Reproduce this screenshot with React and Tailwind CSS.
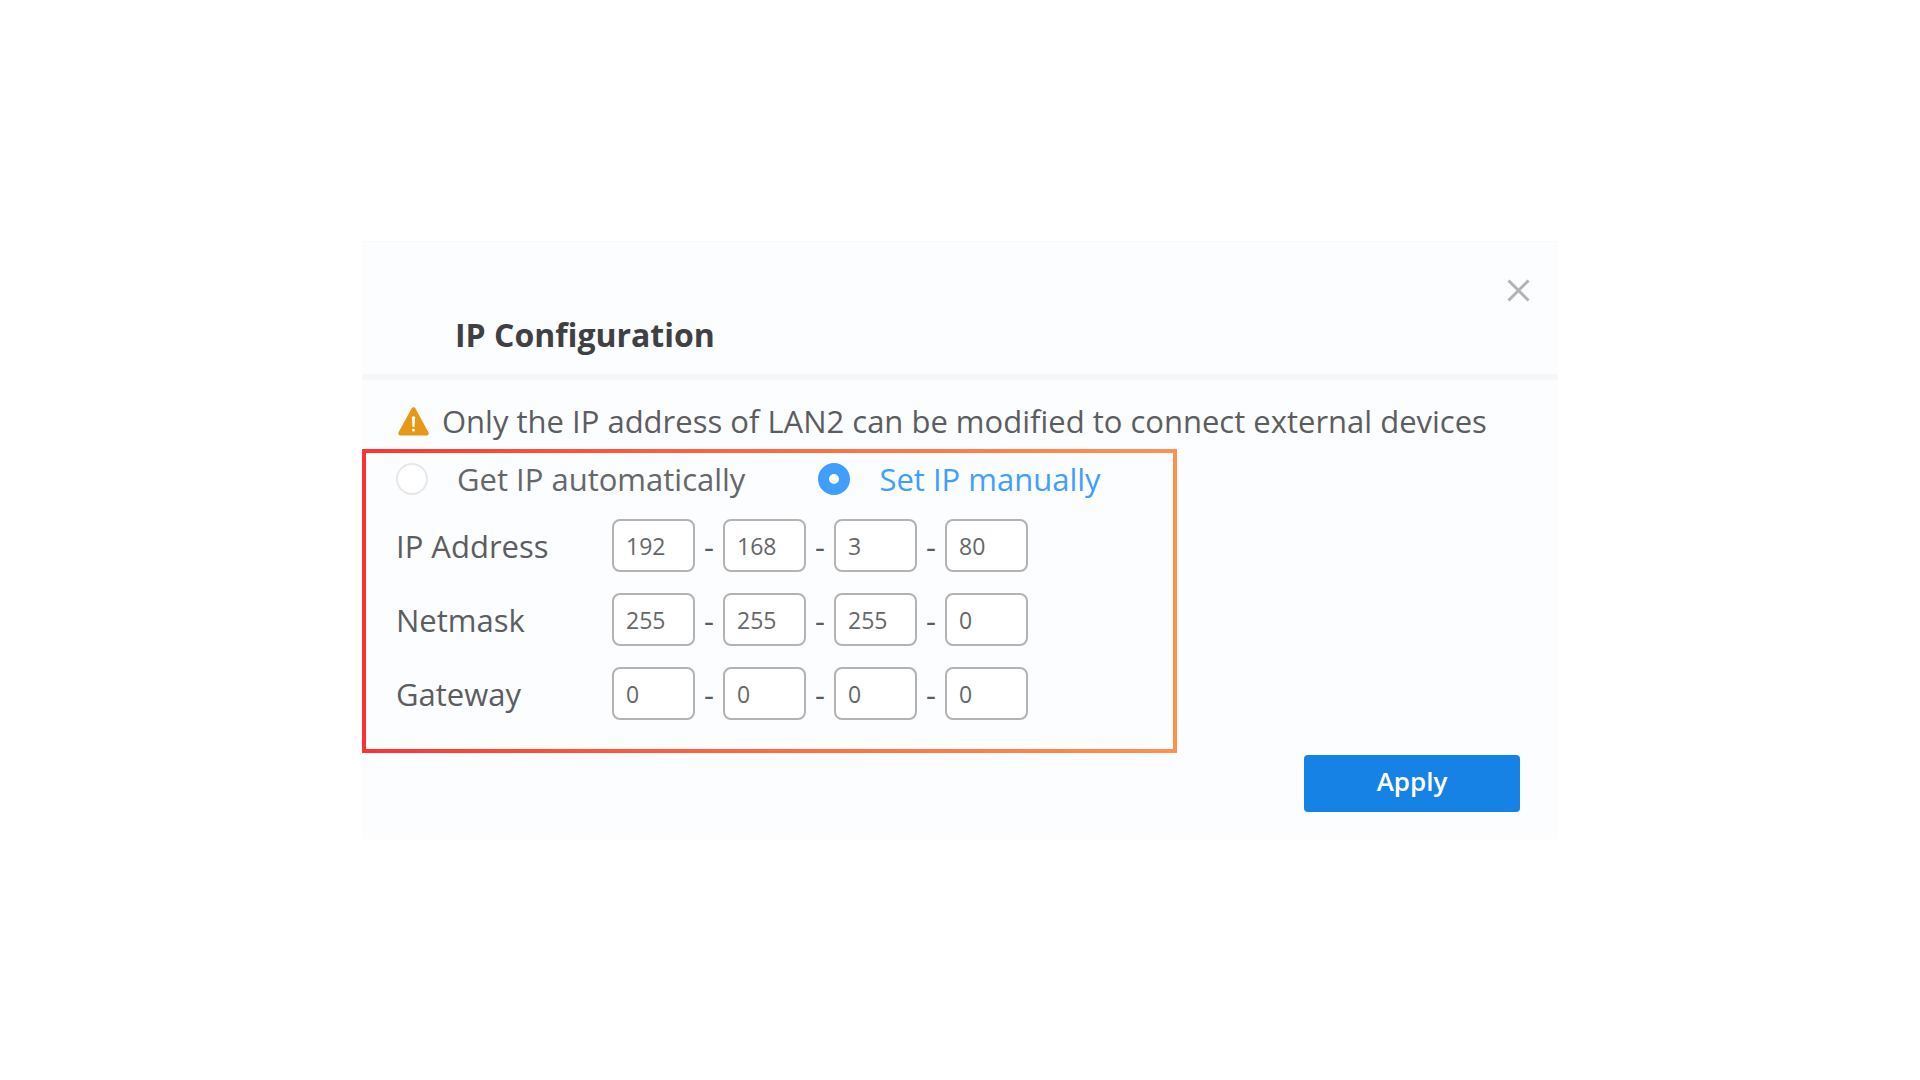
import { useState } from "react";

const FIELDS = [
  { id: "ip", label: "IP Address", octets: ["192", "168", "3", "80"] },
  { id: "netmask", label: "Netmask", octets: ["255", "255", "255", "0"] },
  { id: "gateway", label: "Gateway", octets: ["0", "0", "0", "0"] },
];

function WarningIcon() {
  return (
    <svg viewBox="0 0 31 29" className="h-[29px] w-[31px] shrink-0" aria-hidden="true">
      <path
        d="M15.5 2.5L28.5 26.3H2.5Z"
        fill="#e69817"
        stroke="#e69817"
        strokeWidth="4.4"
        strokeLinejoin="round"
      />
      <path d="M13.9 10Q15.5 8.6 17.1 10L16.5 20H14.5Z" fill="#fff" />
      <circle cx="15.5" cy="23" r="1.5" fill="#fff" />
    </svg>
  );
}

function CloseIcon() {
  return (
    <svg viewBox="0 0 23 23" className="size-[23px]" aria-hidden="true">
      <path d="M1.5 1.5L21.5 21.5M21.5 1.5L1.5 21.5" stroke="#b2b3b5" strokeWidth="3" fill="none" />
    </svg>
  );
}

function ModeOption({ value, mode, onSelect, children }) {
  return (
    <label
      className={
        mode === value
          ? "flex items-center gap-[29px] text-[#409eff]"
          : "flex items-center gap-[29px] text-[#66676a]"
      }
    >
      <input
        type="radio"
        name="mode"
        value={value}
        checked={mode === value}
        onChange={() => onSelect(value)}
        className="size-8 shrink-0 appearance-none rounded-full border-2 border-[#e6e7ea] bg-white checked:border-[11px] checked:border-[#409eff]"
      />
      {children}
    </label>
  );
}

function AddressRow({ field }) {
  return (
    <div role="group" aria-labelledby={field.id} className="flex items-center">
      <span id={field.id} className="w-[216px] shrink-0">
        {field.label}
      </span>
      {field.octets.map((octet, i) => (
        <div key={i} className="flex items-center">
          {i > 0 && <span className="w-7 text-center">-</span>}
          <input
            type="text"
            inputMode="numeric"
            aria-label={`${field.label} ${i + 1}`}
            defaultValue={octet}
            className="h-[53px] w-[83px] rounded-lg border-2 border-[#b3b3b5] bg-white px-3 text-[23px] text-[#66676a]"
          />
        </div>
      ))}
    </div>
  );
}

export default function App() {
  const [mode, setMode] = useState("manual");

  return (
    <main className="flex min-h-screen items-center justify-center bg-white font-['Open_Sans',sans-serif] text-[31px] leading-10 text-[#5c5d60]">
      <form
        className="w-full max-w-[1196px] bg-[#fcfdff]"
        onSubmit={(e) => e.preventDefault()}
      >
        <header className="flex items-start justify-between border-t border-b-6 border-t-[#f7f9fb] border-b-[#f5f7f9] pr-7 pb-[19px] pl-[93px]">
          <h1 className="pt-[73px] text-[32px] font-bold text-[#3f4043]">IP Configuration</h1>
          <button type="button" aria-label="Close" className="mt-[37px]">
            <CloseIcon />
          </button>
        </header>

        <p className="flex items-center gap-[13px] pt-[21px] pb-2 pl-9">
          <WarningIcon />
          Only the IP address of LAN2 can be modified to connect external devices
        </p>

        <div className="w-full max-w-[815px] bg-linear-to-r from-[#ff3131] to-[#ff914d] p-1">
          <div className="bg-[#fcfdff] pt-1.5 pb-[29px] pl-[30px]">
            <div role="radiogroup" aria-label="IP mode" className="flex items-center gap-[73px]">
              <ModeOption value="auto" mode={mode} onSelect={setMode}>
                Get IP automatically
              </ModeOption>
              <ModeOption value="manual" mode={mode} onSelect={setMode}>
                Set IP manually
              </ModeOption>
            </div>
            <div className="mt-5 flex flex-col gap-[21px]">
              {FIELDS.map((field) => (
                <AddressRow key={field.id} field={field} />
              ))}
            </div>
          </div>
        </div>

        <div className="flex justify-end pt-0.5 pr-[38px] pb-[27px]">
          <button
            type="submit"
            className="h-[57px] w-[216px] rounded bg-[#1682e6] pb-1.5 text-[26px] font-semibold text-white"
          >
            Apply
          </button>
        </div>
      </form>
    </main>
  );
}
